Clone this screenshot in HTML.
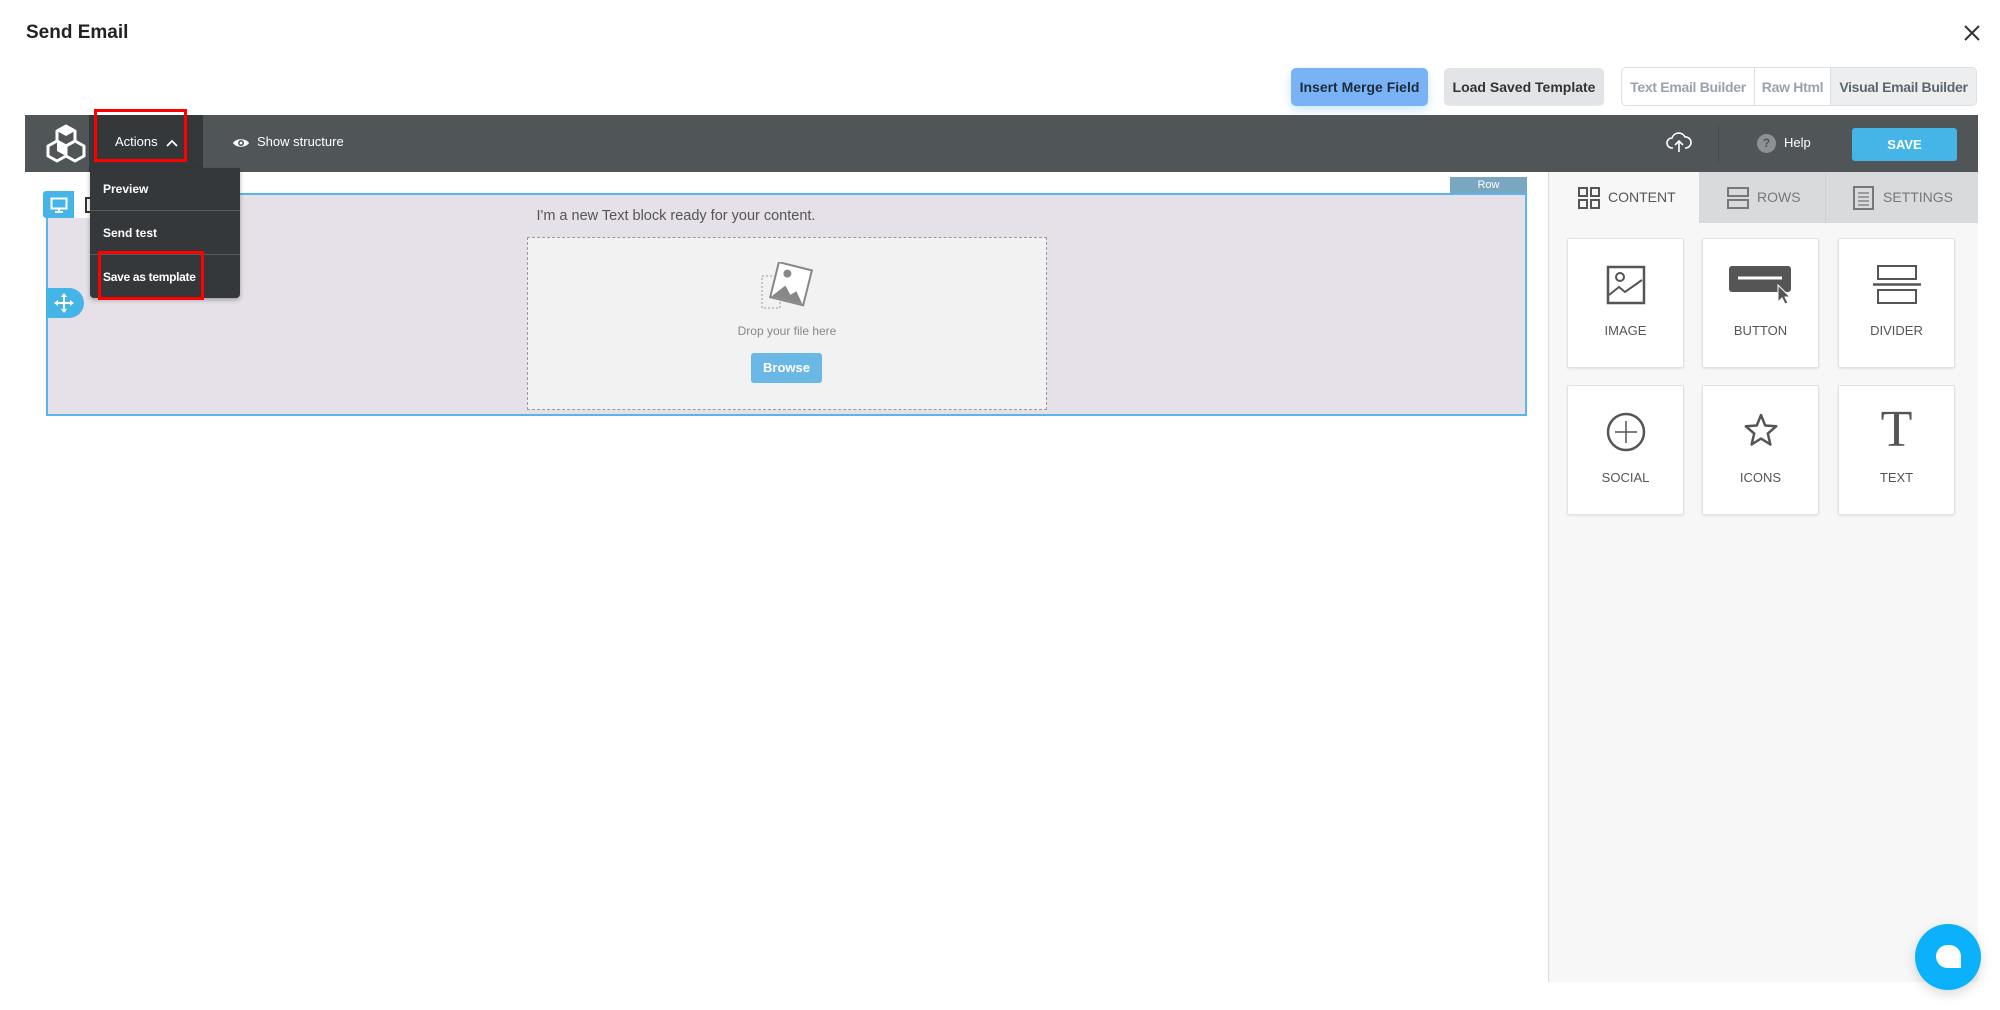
<!DOCTYPE html>
<html><head><style>
*{margin:0;padding:0;box-sizing:border-box}
body{width:2000px;height:1010px;position:relative;background:#fff;font-family:"Liberation Sans",sans-serif;overflow:hidden}
.a{position:absolute}
.btn{position:absolute;top:68px;height:38px;border-radius:5px;font-size:14px;font-weight:bold;display:flex;align-items:center;justify-content:center}
.card{position:absolute;width:117px;height:130px;background:#fff;border:1px solid #e2e2e2;border-radius:2px;box-shadow:0 1px 2px rgba(0,0,0,.08)}
.card .lab{position:absolute;left:0;right:0;top:84px;text-align:center;font-size:13px;color:#555}
.card svg{position:absolute;left:50%;top:26px;transform:translateX(-50%)}
.dd{position:absolute;left:103px;font-size:12px;font-weight:bold;color:#fff}
</style></head><body>
<div class="a" style="left:26px;top:22px;font-size:19px;font-weight:bold;color:#222">Send Email</div>
<svg class="a" style="left:1964px;top:25px" width="16" height="16"><path d="M1 1L15 15M15 1L1 15" stroke="#333" stroke-width="2"/></svg>

<div class="btn" style="left:1291px;width:137px;background:#7ab3f5;color:#1c2b3a;box-shadow:0 4px 10px rgba(120,200,250,.4)">Insert Merge Field</div>
<div class="btn" style="left:1444px;width:160px;background:#e2e4e7;color:#333">Load Saved Template</div>
<div class="a" style="left:1621px;top:67px;width:356px;height:39px;border:1px solid #dcdfe3;border-radius:5px;display:flex;font-size:14px;font-weight:bold;overflow:hidden;letter-spacing:-0.3px">
<div style="width:133px;display:flex;align-items:center;justify-content:center;color:#9aa3ad;border-right:1px solid #dcdfe3">Text Email Builder</div>
<div style="width:76px;display:flex;align-items:center;justify-content:center;color:#9aa3ad;border-right:1px solid #dcdfe3">Raw Html</div>
<div style="flex:1;display:flex;align-items:center;justify-content:center;color:#5d6670;background:#eceef0">Visual Email Builder</div>
</div>

<!-- toolbar -->
<div class="a" style="left:25px;top:115px;width:1953px;height:57px;background:#505558"></div>
<svg class="a" style="left:44px;top:122px" width="44" height="44" viewBox="0 0 44 44"><g fill="none" stroke="#fff" stroke-width="3" stroke-linejoin="round"><path d="M22 4l9 5v10l-9 5-9-5V9z"/><path d="M13 19l9 5v10l-9 5-9-5V24z"/><path d="M31 19l9 5v10l-9 5-9-5V24z"/></g><path d="M13 19l9 5v10l-9-5z M22 4l9 5-9 5-9-5z" fill="#fff"/></svg>
<div class="a" style="left:89px;top:115px;width:114px;height:57px;background:#35383b"></div>
<div class="a" style="left:115px;top:134px;font-size:13px;color:#fff">Actions</div>
<svg class="a" style="left:166px;top:139px" width="12" height="8"><path d="M1 7L6 2L11 7" stroke="#fff" stroke-width="1.8" fill="none"/></svg>
<div class="a" style="left:94px;top:109px;width:93px;height:53px;border:3px solid #f00"></div>
<svg class="a" style="left:232px;top:136px" width="18" height="14" viewBox="0 0 18 14"><path d="M1 7C4 2 14 2 17 7C14 12 4 12 1 7Z" fill="#fff"/><circle cx="9" cy="7" r="3" fill="#505558"/><circle cx="9" cy="7" r="1.4" fill="#fff"/></svg>
<div class="a" style="left:257px;top:134px;font-size:13px;color:#fff">Show structure</div>
<svg class="a" style="left:1666px;top:130px" width="26" height="24" viewBox="0 0 26 24"><path d="M7 18H6a5 5 0 0 1 0-10 7 7 0 0 1 13-1 5 5 0 0 1 1 11h-1" fill="none" stroke="#fff" stroke-width="1.6"/><path d="M13 22V11M9 15l4-4 4 4" fill="none" stroke="#fff" stroke-width="1.6"/></svg>
<div class="a" style="left:1718px;top:126px;width:1px;height:36px;background:#464a4d"></div>
<div class="a" style="left:1757px;top:134px;width:19px;height:19px;border-radius:50%;background:#8d9195;color:#505558;font-size:12px;font-weight:bold;text-align:center;line-height:19px">?</div>
<div class="a" style="left:1784px;top:135px;font-size:13px;color:#fff">Help</div>
<div class="a" style="left:1852px;top:128px;width:105px;height:33px;background:#45b5e8;border-radius:3px;color:#fff;font-size:13px;font-weight:bold;text-align:center;line-height:33px">SAVE</div>

<!-- canvas row -->
<div class="a" style="left:1450px;top:177px;width:77px;height:17px;background:#7aa7c0;color:#fff;font-size:11px;text-align:center;line-height:17px">Row</div>
<div class="a" style="left:46px;top:193px;width:1481px;height:223px;background:#e6e1e8;border:2px solid #5bb5e8"></div>
<div class="a" style="left:43px;top:191px;width:31px;height:27px;background:#45b5e8;border-radius:3px 0 0 3px"></div>
<svg class="a" style="left:50px;top:197px" width="18" height="16"><rect x="1.5" y="1.5" width="15" height="10" fill="none" stroke="#fff" stroke-width="2"/><path d="M9 12v3M5 15h8" stroke="#fff" stroke-width="2"/></svg>
<div class="a" style="left:74px;top:191px;width:20px;height:27px;background:#fff"></div>
<div class="a" style="left:85px;top:197px;width:6px;height:16px;border:2px solid #333;border-right:none"></div>
<div class="a" style="left:46px;top:288px;width:38px;height:30px;background:#45b5e8;border-radius:0 15px 15px 0"></div>
<svg class="a" style="left:53px;top:292px" width="22" height="22" viewBox="0 0 22 22"><path d="M11 2v18M2 11h18" stroke="#fff" stroke-width="2"/><path d="M11 1l-3 4h6zM11 21l-3-4h6zM1 11l4-3v6zM21 11l-4-3v6z" fill="#fff"/></svg>
<div class="a" style="left:426px;top:208px;width:500px;text-align:center;font-size:14.5px;color:#555">I'm a new Text block ready for your content.</div>
<div class="a" style="left:527px;top:237px;width:520px;height:173px;background:#f2f2f2;border:1px dashed #999"></div>
<svg class="a" style="left:760px;top:262px" width="56" height="50" viewBox="0 0 56 50"><rect x="2" y="14" width="18" height="32" fill="none" stroke="#999" stroke-dasharray="2 2"/><g transform="rotate(14 32 22)"><rect x="14" y="4" width="34" height="36" fill="#fff" stroke="#888" stroke-width="2"/><path d="M15 39l11-14 7 8 5-5 9 11z" fill="#888"/><circle cx="25" cy="13" r="4" fill="#888"/></g></svg>
<div class="a" style="left:527px;top:324px;width:520px;text-align:center;font-size:12px;color:#888">Drop your file here</div>
<div class="a" style="left:751px;top:353px;width:71px;height:30px;background:#6ab8e6;border-radius:3px;color:#fff;font-size:13px;font-weight:bold;text-align:center;line-height:30px">Browse</div>

<!-- dropdown -->
<div class="a" style="left:90px;top:168px;width:150px;height:130px;background:#35383b;border-radius:0 0 4px 4px;box-shadow:0 2px 5px rgba(0,0,0,.3)"></div>
<div class="a" style="left:90px;top:210px;width:150px;height:1px;background:#555a5e"></div>
<div class="a" style="left:90px;top:254px;width:150px;height:1px;background:#555a5e"></div>
<div class="dd" style="top:182px">Preview</div>
<div class="dd" style="top:226px">Send test</div>
<div class="dd" style="top:270px;letter-spacing:-0.3px">Save as template</div>
<div class="a" style="left:98px;top:251px;width:106px;height:49px;border:3px solid #f00"></div>

<!-- right panel -->
<div class="a" style="left:1548px;top:172px;width:430px;height:810px;background:#f7f7f7;border-left:1px solid #d8d8d8"></div>
<div class="a" style="left:1699px;top:172px;width:279px;height:51px;background:#d8dadc"></div>
<div class="a" style="left:1825px;top:172px;width:1px;height:51px;background:#cfd1d3"></div>
<svg class="a" style="left:1578px;top:187px" width="22" height="22"><g fill="none" stroke="#555" stroke-width="2"><rect x="1" y="1" width="8" height="8"/><rect x="13" y="1" width="8" height="8"/><rect x="1" y="13" width="8" height="8"/><rect x="13" y="13" width="8" height="8"/></g></svg>
<div class="a" style="left:1608px;top:189px;font-size:14px;color:#555">CONTENT</div>
<svg class="a" style="left:1727px;top:187px" width="22" height="22"><g fill="none" stroke="#777" stroke-width="2"><rect x="1" y="1" width="20" height="8"/><rect x="1" y="13" width="20" height="8"/></g></svg>
<div class="a" style="left:1757px;top:189px;font-size:14px;color:#777">ROWS</div>
<svg class="a" style="left:1853px;top:186px" width="21" height="24"><rect x="1" y="1" width="19" height="22" fill="none" stroke="#777" stroke-width="2"/><path d="M5 7h11M5 11h11M5 15h11M5 19h11" stroke="#777" stroke-width="1.3"/></svg>
<div class="a" style="left:1883px;top:189px;font-size:14px;color:#777">SETTINGS</div>

<div class="card" style="left:1567px;top:238px"><svg width="40" height="40" viewBox="0 0 40 40"><rect x="2" y="2" width="36" height="36" fill="none" stroke="#555" stroke-width="2.5"/><circle cx="14" cy="12" r="4" fill="none" stroke="#555" stroke-width="2"/><path d="M3 30l10-8 6 5 17-12" fill="none" stroke="#555" stroke-width="2"/></svg><div class="lab">IMAGE</div></div>
<div class="card" style="left:1702px;top:238px"><svg width="66" height="40" viewBox="0 0 66 40"><rect x="1" y="1" width="62" height="26" rx="3" fill="#555"/><path d="M10 13h44" stroke="#fff" stroke-width="3"/><path d="M50 20l0 17 4-4 3 6 3-1-3-6 5 0z" fill="#555" stroke="#fff" stroke-width="1"/></svg><div class="lab">BUTTON</div></div>
<div class="card" style="left:1838px;top:238px"><svg width="50" height="40" viewBox="0 0 50 40"><rect x="6" y="1" width="38" height="13" fill="none" stroke="#555" stroke-width="2"/><rect x="6" y="25" width="38" height="13" fill="none" stroke="#555" stroke-width="2"/><path d="M1 19.5h48" stroke="#555" stroke-width="2.5"/></svg><div class="lab">DIVIDER</div></div>
<div class="card" style="left:1567px;top:385px"><svg width="40" height="40" viewBox="0 0 40 40"><circle cx="20" cy="20" r="18" fill="none" stroke="#555" stroke-width="2.5"/><path d="M20 9v22M9 20h22" stroke="#555" stroke-width="1.5"/></svg><div class="lab">SOCIAL</div></div>
<div class="card" style="left:1702px;top:385px"><svg width="36" height="36" viewBox="0 0 36 36"><path d="M18 3l4.2 10.5 11 .8-8.4 7.2 2.6 11L18 26.6 8.6 32.5l2.6-11L2.8 14.3l11-.8z" fill="none" stroke="#555" stroke-width="2.5" stroke-linejoin="round"/></svg><div class="lab">ICONS</div></div>
<div class="card" style="left:1838px;top:385px"><div style="position:absolute;left:0;right:0;top:18px;text-align:center;font-family:'Liberation Serif',serif;font-size:52px;color:#555;line-height:52px">T</div><div class="lab">TEXT</div></div>

<div class="a" style="left:1915px;top:924px;width:66px;height:66px;border-radius:50%;background:#0bb2fb;box-shadow:0 4px 12px rgba(0,0,0,.15)"></div>
<div class="a" style="left:1936px;top:945px;width:25px;height:23px;background:#fff;border-radius:12px 12px 0 12px"></div>
</body></html>
